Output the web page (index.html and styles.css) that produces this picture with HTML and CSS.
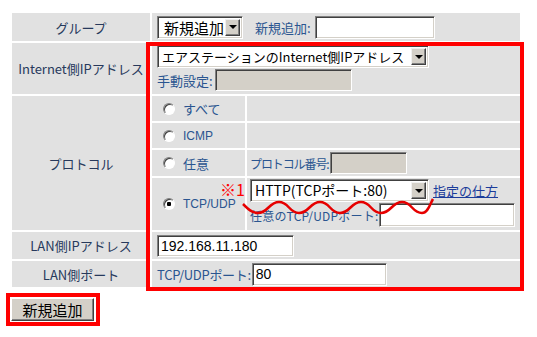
FILE: index.html
```html
<!DOCTYPE html>
<html lang="ja">
<head>
<meta charset="utf-8">
<title>Port forwarding</title>
<link rel="stylesheet" href="styles.css">
</head>
<body>
<div class="page">
  <div class="form">
    <div class="label">グループ</div>
    <div class="cell">
      <span class="combo w-group"><select class="sel group"><option>新規追加</option></select><span class="drop"></span></span>
      <span class="blue gap-l">新規追加:</span>
      <input class="text w-new" type="text">
    </div>

    <div class="label">Internet側IPアドレス</div>
    <div class="cell col">
      <span class="combo w-inet"><select class="sel"><option>エアステーションのInternet側IPアドレス</option></select><span class="drop"></span></span>
      <div class="line manual"><span class="blue">手動設定:</span><input class="text disabled w-manual" type="text" disabled></div>
    </div>

    <div class="label">プロトコル</div>
    <div class="proto">
      <div class="pc radio-cell"><input class="radio" type="radio" name="p"><span class="blue">すべて</span></div>
      <div class="pc"></div>
      <div class="pc radio-cell"><input class="radio" type="radio" name="p"><span class="blue icmp">ICMP</span></div>
      <div class="pc"></div>
      <div class="pc radio-cell"><input class="radio" type="radio" name="p"><span class="blue">任意</span></div>
      <div class="pc right"><span class="blue narrow-proto">プロトコル番号:</span><input class="text disabled w-proto" type="text" disabled></div>
      <div class="pc radio-cell"><input class="radio" type="radio" name="p" checked><span class="blue tcp">TCP/UDP</span></div>
      <div class="pc tcp-cell">
        <div class="line"><span class="combo w-http"><select class="sel big"><option>HTTP(TCPポート:80)</option></select><span class="drop"></span></span><a class="link" href="#">指定の仕方</a></div>
        <div class="line any"><span class="blue narrow-any">任意のTCP/UDPポート:</span><input class="text w-any" type="text"></div>
      </div>
    </div>

    <div class="label">LAN側IPアドレス</div>
    <div class="cell"><input class="text w-lanip" type="text" value="192.168.11.180"></div>

    <div class="label">LAN側ポート</div>
    <div class="cell"><span class="blue narrow2">TCP/UDPポート:</span><input class="text w-port" type="text" value="80"></div>
  </div>

  <div class="btn-mark"><button class="btn" type="button">新規追加</button></div>

  <div class="annot-box"></div>
  <span class="note">※1</span>
  <svg class="wave" width="537" height="337" viewBox="0 0 537 337">
    <path d="M243 204 C248 209, 252 213, 258 213 C268 213, 269 202, 279 202 C289 202, 289 213, 299 213 C309 213, 310 202, 320 202 C330 202, 330 213, 340 213 C350 213, 351 202, 361 202 C371 202, 371 213, 381 213 C391 213, 392 202, 402 202 C412 202, 412 213, 422 213 C428 213, 430 204, 433 199" fill="none" stroke="#e60000" stroke-width="2.5"/>
  </svg>
</div>
</body>
</html>
```

FILE: styles.css
```css
body {
  margin: 0;
  background: #fff;
  font-family: "Noto Sans CJK JP", sans-serif;
  font-size: 13px;
}

.page {
  position: relative;
  width: 537px;
  height: 337px;
  box-sizing: border-box;
  padding: 13px 0 0 6px;
}

.form {
  margin-left: 6px;
  width: 508px;
  display: grid;
  grid-template-columns: 138px 368px;
  grid-template-rows: 28px 51px 134px 27px 26px;
  gap: 2px;
}

.label {
  background: #e1e1e1;
  color: #27395c;
  display: flex;
  align-items: center;
  justify-content: center;
  font-size: 13px;
}

.cell {
  background: #e1e1e1;
  padding: 0 5px;
  display: flex;
  align-items: center;
}

.cell.col {
  flex-direction: column;
  align-items: flex-start;
  justify-content: flex-start;
  padding-top: 2px;
}

.line {
  display: flex;
  align-items: center;
}

.manual {
  margin-top: 1px;
}

.blue {
  color: #2a5590;
  font-size: 13px;
  white-space: nowrap;
}

.narrow-proto {
  font-size: 12px;
  letter-spacing: -1.1px;
}

.narrow-any {
  font-size: 12px;
  letter-spacing: 0.2px;
}

.narrow2 {
  letter-spacing: -0.3px;
}

.gap-l {
  margin-left: 12px;
  margin-right: 4px;
}

/* text inputs */
.text {
  box-sizing: border-box;
  height: 22px;
  margin: 0;
  padding: 0 3px;
  border: 1px solid;
  border-color: #808080 #ffffff #ffffff #808080;
  box-shadow: inset 1px 1px 0 #404040, inset -1px -1px 0 #d4d0c8;
  background: #fff;
  font-family: "Liberation Sans", sans-serif;
  font-size: 14px;
  color: #000;
  outline: none;
}

.disabled {
  background: #d4d0c8;
}

.w-new { width: 120px; height: 23px; }
.w-manual { width: 137px; margin-left: 2px; }
.w-proto { width: 77px; margin-left: 1px; }
.w-any { width: 136px; height: 24px; margin-left: 1px; }
.w-lanip { width: 137px; }
.w-port { width: 135px; height: 23px; margin-left: 1px; }

/* combo boxes */
.combo {
  box-sizing: border-box;
  display: inline-flex;
  height: 23px;
  border: 1px solid;
  border-color: #808080 #ffffff #ffffff #808080;
  box-shadow: inset 1px 1px 0 #404040, inset -1px -1px 0 #d4d0c8;
  background: #fff;
  padding: 2px;
}

.sel {
  appearance: none;
  -webkit-appearance: none;
  flex: 1;
  min-width: 0;
  border: 0;
  margin: 0;
  padding: 0 0 0 2px;
  background: transparent;
  font-family: "Noto Sans CJK JP", sans-serif;
  font-size: 13px;
  color: #000;
  line-height: 17px;
  height: 17px;
  outline: none;
}

.sel.big {
  font-size: 14px;
}

.sel.group {
  font-size: 15px;
  padding-left: 4px;
}

.drop {
  box-sizing: border-box;
  width: 15px;
  height: 17px;
  background: #d4d0c8;
  border: 1px solid;
  border-color: #f0f0f0 #404040 #404040 #f0f0f0;
  box-shadow: inset -1px -1px 0 #808080;
  display: flex;
  align-items: center;
  justify-content: center;
}

.drop::after {
  content: "";
  border-left: 4px solid transparent;
  border-right: 4px solid transparent;
  border-top: 4px solid #000;
}

.w-group { width: 86px; }
.w-inet { width: 272px; }
.w-http { width: 179px; }

/* protocol sub-grid */
.proto {
  display: grid;
  grid-template-columns: 93px 273px;
  grid-template-rows: 25px 25px 26px 52px;
  gap: 2px;
}

.pc {
  background: #e1e1e1;
}

.radio-cell {
  display: flex;
  align-items: center;
  padding-left: 11px;
}

.radio {
  appearance: none;
  -webkit-appearance: none;
  box-sizing: border-box;
  width: 12px;
  height: 12px;
  margin: 0 8px 0 0;
  border-radius: 50%;
  border: 1px solid;
  border-color: #808080 #ffffff #ffffff #808080;
  box-shadow: inset 1px 1px 0 #404040;
  background: #fff;
  flex: none;
}

.radio:checked {
  background: radial-gradient(circle at 50% 50%, #000 0 2px, #fff 2.5px);
}

.icmp, .tcp {
  font-family: "Liberation Sans", sans-serif;
  font-size: 12px;
  line-height: 12px;
}

.right {
  display: flex;
  align-items: center;
  padding-left: 3px;
}

.tcp-cell {
  display: flex;
  flex-direction: column;
  align-items: flex-start;
  padding: 1px 0 0 3px;
}

.any {
  margin-top: 1px;
}

.link {
  margin-left: 4px;
  color: #1b3c9a;
  font-size: 13px;
  text-decoration: underline;
  white-space: nowrap;
}

/* button */
.btn-mark {
  display: inline-block;
  margin-top: 6px;
  border: 4px solid #ff0000;
  padding: 1px 2px 1px 1px;
  line-height: 0;
}

.btn {
  box-sizing: border-box;
  width: 83px;
  height: 23px;
  margin: 0;
  padding: 0;
  background: #d4d0c8;
  border: 1px solid;
  border-color: #ffffff #404040 #404040 #ffffff;
  box-shadow: inset -1px -1px 0 #808080;
  font-family: "Noto Sans CJK JP", sans-serif;
  font-size: 15px;
  line-height: 20px;
  color: #000;
}

/* annotations */
.annot-box {
  position: absolute;
  left: 146px;
  top: 42px;
  width: 378px;
  height: 249px;
  box-sizing: border-box;
  border: 4px solid #ff0000;
}

.note {
  position: absolute;
  left: 220px;
  top: 182px;
  color: #ff0000;
  font-family: "Noto Sans CJK JP", sans-serif;
  font-size: 16px;
  line-height: 15px;
}

.wave {
  position: absolute;
  left: 0;
  top: 0;
  pointer-events: none;
}
```
